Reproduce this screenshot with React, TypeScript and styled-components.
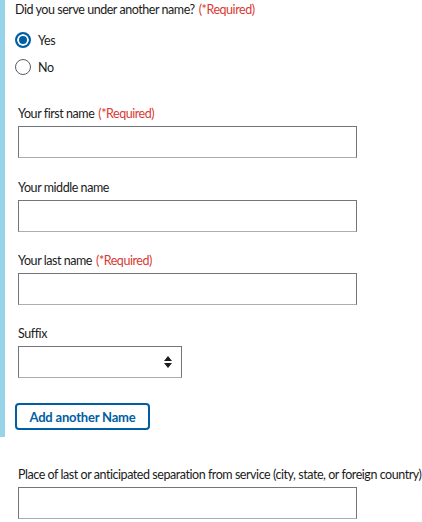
import React from "react";
import styled, { createGlobalStyle } from "styled-components";

const Global = createGlobalStyle`
  html, body { margin: 0; padding: 0; background: #fff; }
  body {
    font-family: "Lato", "Liberation Sans", sans-serif;
    color: #1b1b1b;
    font-size: 12.5px;
    letter-spacing: -0.45px;
  }
`;

const Page = styled.div`
  width: 422px;
  height: 522px;
  overflow: hidden;
`;

const Section = styled.div`
  border-left: 5px solid #97d4ea;
  padding-left: 10px;
  height: 437px;
  box-sizing: border-box;
`;

const Question = styled.div`
  line-height: 20px;
`;

const Required = styled.span`
  color: #d83933;
  margin-left: 4px;
`;

const RadioList = styled.div`
  display: flex;
  flex-direction: column;
  gap: 11px;
  margin-top: 12px;
`;

const RadioRow = styled.label`
  display: flex;
  align-items: center;
  gap: 7px;
  height: 16px;
`;

const RadioCircle = styled.span<{ checked?: boolean }>`
  width: 16px;
  height: 16px;
  box-sizing: border-box;
  border-radius: 50%;
  border: ${(p) => (p.checked ? "2px solid #005ea2" : "1px solid #565c65")};
  background: ${(p) => (p.checked ? "#005ea2" : "#fff")};
  box-shadow: ${(p) => (p.checked ? "inset 0 0 0 2px #fff" : "none")};
`;

const Field = styled.div<{ top: number }>`
  padding-left: 3px;
  margin-top: ${(p) => p.top}px;
  display: flex;
  flex-direction: column;
`;

const Label = styled.div`
  line-height: 16px;
  margin-bottom: 4px;
  white-space: nowrap;
`;

const TextInput = styled.div<{ w: number }>`
  width: ${(p) => p.w}px;
  height: 32px;
  box-sizing: border-box;
  border: 1px solid #71767a;
  border-bottom-color: #a9aeb1;
  background: #fff;
`;

const SelectBox = styled(TextInput)`
  display: flex;
  align-items: center;
  justify-content: flex-end;
  padding-right: 9px;
`;

const AddButton = styled.button`
  margin-top: 25px;
  width: 135px;
  height: 27px;
  box-sizing: border-box;
  border: 2px solid #005ea2;
  border-radius: 4px;
  background: #fff;
  color: #005ea2;
  font-family: "Lato", "Liberation Sans", sans-serif;
  font-weight: 700;
  font-size: 13px;
  letter-spacing: -0.2px;
  padding: 0;
`;

const Outside = styled.div`
  padding-left: 15px;
`;

export default function App() {
  return (
    <Page>
      <Global />
      <Section>
        <Question>
          Did you serve under another name?<Required>(*Required)</Required>
        </Question>
        <RadioList>
          <RadioRow>
            <RadioCircle checked />
            Yes
          </RadioRow>
          <RadioRow>
            <RadioCircle />
            No
          </RadioRow>
        </RadioList>
        <Field top={31}>
          <Label>
            Your first name<Required>(*Required)</Required>
          </Label>
          <TextInput w={339} />
        </Field>
        <Field top={22}>
          <Label>Your middle name</Label>
          <TextInput w={339} />
        </Field>
        <Field top={21}>
          <Label>
            Your last name<Required>(*Required)</Required>
          </Label>
          <TextInput w={339} />
        </Field>
        <Field top={21}>
          <Label>Suffix</Label>
          <SelectBox w={164}>
            <svg width="8" height="12" viewBox="0 0 8 12">
              <path d="M4 0 L8 5 L0 5 Z M0 7 L8 7 L4 12 Z" fill="#1b1b1b" />
            </svg>
          </SelectBox>
        </Field>
        <AddButton>Add another Name</AddButton>
      </Section>
      <Outside>
        <Field top={30}>
          <Label>Place of last or anticipated separation from service (city, state, or foreign country)</Label>
          <TextInput w={339} />
        </Field>
      </Outside>
    </Page>
  );
}
